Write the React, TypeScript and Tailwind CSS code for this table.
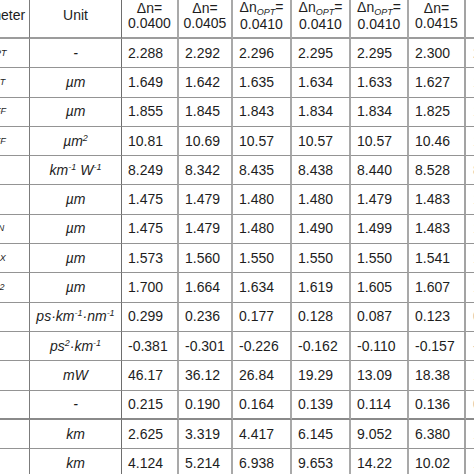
import React from "react";

type Row = { p: React.ReactNode; u: React.ReactNode; v: string[]; thick?: boolean };

const Sub = ({ children }: { children: React.ReactNode }) => (
  <span className="text-[9px] leading-none italic align-[-3px]">{children}</span>
);
const Sup = ({ children }: { children: React.ReactNode }) => (
  <span className="text-[9px] leading-none align-[5px]">{children}</span>
);

const rows: Row[] = [
  { p: <><i>V</i><Sub>OPT</Sub></>, u: "-", v: ["2.288", "2.292", "2.296", "2.295", "2.295", "2.300", "2.304"] },
  { p: <><i>λ</i><Sub>CUT</Sub></>, u: "µm", v: ["1.649", "1.642", "1.635", "1.634", "1.633", "1.627", "1.621"] },
  { p: <><i>w</i><Sub>EFF</Sub></>, u: "µm", v: ["1.855", "1.845", "1.843", "1.834", "1.834", "1.825", "1.816"] },
  { p: <><i>A</i><Sub>EFF</Sub></>, u: <>µm<Sup>2</Sup></>, v: ["10.81", "10.69", "10.57", "10.57", "10.57", "10.46", "10.35"] },
  { p: <i>γ</i>, u: <>km<Sup>-1</Sup> W<Sup>-1</Sup></>, v: ["8.249", "8.342", "8.435", "8.438", "8.440", "8.528", "8.617"] },
  { p: <><i>λ</i><Sub>0</Sub></>, u: "µm", v: ["1.475", "1.479", "1.480", "1.480", "1.479", "1.483", "1.487"] },
  { p: <><i>λ</i><Sub>MIN</Sub></>, u: "µm", v: ["1.475", "1.479", "1.480", "1.490", "1.499", "1.483", "1.487"] },
  { p: <><i>λ</i><Sub>MAX</Sub></>, u: "µm", v: ["1.573", "1.560", "1.550", "1.550", "1.550", "1.541", "1.532"] },
  { p: <><i>λ</i><Sub>ZD2</Sub></>, u: "µm", v: ["1.700", "1.664", "1.634", "1.619", "1.605", "1.607", "1.583"] },
  { p: <i>D</i>, u: <>ps·km<Sup>-1</Sup>·nm<Sup>-1</Sup></>, v: ["0.299", "0.236", "0.177", "0.128", "0.087", "0.123", "0.072"] },
  { p: <i>S</i>, u: <>ps<Sup>2</Sup>·km<Sup>-1</Sup></>, v: ["-0.381", "-0.301", "-0.226", "-0.162", "-0.110", "-0.157", "-0.092"] },
  { p: <i>P</i>, u: "mW", v: ["46.17", "36.12", "26.84", "19.29", "13.09", "18.38", "10.73"] },
  { p: <i>η</i>, u: "-", v: ["0.215", "0.190", "0.164", "0.139", "0.114", "0.136", "0.108"], thick: true },
  { p: <i>L</i>, u: "km", v: ["2.625", "3.319", "4.417", "6.145", "9.052", "6.380", "11.12"] },
  { p: <i>L</i>, u: "km", v: ["4.124", "5.214", "6.938", "9.653", "14.22", "10.02", "17.47"] },
];

const colBorder = [
  "border-r border-r-[#7c7c7c]",
  "border-r border-r-[#6e6e6e]",
  "border-r-2 border-r-[#a9a9a9]",
  "border-r-2 border-r-[#a9a9a9]",
  "border-r-2 border-r-[#a9a9a9]",
  "border-r-2 border-r-[#a9a9a9]",
  "border-r-2 border-r-[#a9a9a9]",
  "border-r-2 border-r-[#a3a3a3]",
  "",
];

const Delta = ({ opt, val }: { opt?: boolean; val: string }) => (
  <div className="flex flex-col items-center leading-[14.5px]">
    <span>
      Δn{opt ? <Sub>OPT</Sub> : null}=
    </span>
    <span>{val}</span>
  </div>
);

export default function App() {
  const header: React.ReactNode[] = [
    "Parameter",
    "Unit",
    <Delta val="0.0400" />,
    <Delta val="0.0405" />,
    <Delta opt val="0.0410" />,
    <Delta opt val="0.0410" />,
    <Delta opt val="0.0410" />,
    <Delta val="0.0415" />,
    <Delta val="0.0420" />,
  ];
  return (
    <div className="w-[474px] h-[474px] overflow-hidden bg-white font-['Liberation_Sans',Arial,sans-serif] text-[14px] text-[#1d1d1d]">
      <div className="-ml-[44px] grid grid-cols-[74px_92px_57px_54px_59px_59px_58px_57px_60px]">
        {header.map((h, i) => (
          <div
            key={"h" + i}
            className={`h-[39px] flex items-center ${i === 8 ? "pl-[9px]" : "justify-center"} pb-[6px] border-b-2 border-b-[#9c9c9c] whitespace-nowrap ${colBorder[i]}`}
          >
            {h}
          </div>
        ))}
        {rows.map((r, ri) => {
          const cells: React.ReactNode[] = [r.p, <i>{r.u}</i>, ...r.v];
          return cells.map((c, ci) => (
            <div
              key={ri + "-" + ci}
              className={`h-[29.3px] flex items-center whitespace-nowrap ${
                ci < 2 ? "justify-center" : ci === 8 ? "pl-[7px] text-[#9a9a9a]" : "pl-[6px]"
              } ${r.thick ? "border-b-2 border-b-[#8a8a8a]" : "border-b border-b-[#949494]"} ${colBorder[ci]}`}
            >
              {c}
            </div>
          ));
        })}
      </div>
    </div>
  );
}
